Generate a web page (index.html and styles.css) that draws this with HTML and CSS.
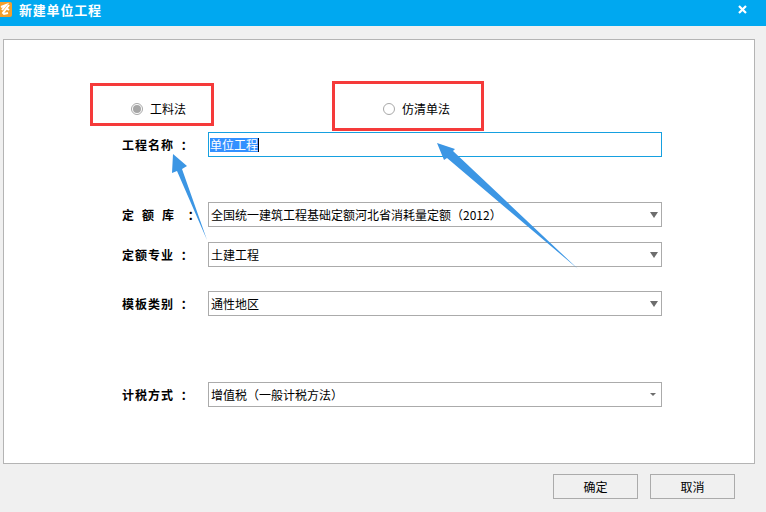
FILE: index.html
```html
<!DOCTYPE html>
<html lang="zh-CN">

<head>
  <meta charset="UTF-8" />
  <title>新建单位工程</title>
  <link rel="stylesheet" href="styles.css">
</head>

<body>
  <div class="window">

    <!-- Title bar -->
    <header class="titlebar">
      <div class="title-left">
        <svg class="logo" width="12" height="15" viewBox="0 0 12 15">
          <rect x="-4" y="0" width="16" height="15" rx="2" fill="#f5a02c" />
          <path d="M1 5 L6 3 L2 8 M9 3 L3 11 L4 12 L8 11 M6 6 L9 8" fill="none" stroke="#fff" stroke-width="2" />
        </svg>
        <span class="title-text">新建单位工程</span>
      </div>
      <svg class="close" width="9" height="9" viewBox="0 0 9 9">
        <path d="M1 1 L8 8 M8 1 L1 8" stroke="#fff" stroke-width="2.2" />
      </svg>
    </header>

    <!-- Main panel -->
    <main class="panel">
      <div class="radios">
        <label class="radio-item">
          <span class="radio checked"></span>
          <span>工料法</span>
        </label>
        <label class="radio-item">
          <span class="radio"></span>
          <span>仿清单法</span>
        </label>
      </div>

      <div class="row row-name">
        <div class="label">工程名称 ：</div>
        <div class="field focused"><span class="selected">单位工程</span><span class="caret"></span></div>
      </div>

      <div class="row row-quota">
        <div class="label"><span class="spread">定额库</span> ：</div>
        <div class="field select">
          <span>全国统一建筑工程基础定额河北省消耗量定额（2012）</span>
          <span class="arrow"></span>
        </div>
      </div>

      <div class="row row-major">
        <div class="label">定额专业 ：</div>
        <div class="field select">
          <span>土建工程</span>
          <span class="arrow"></span>
        </div>
      </div>

      <div class="row row-template">
        <div class="label">模板类别 ：</div>
        <div class="field select">
          <span>通性地区</span>
          <span class="arrow"></span>
        </div>
      </div>

      <div class="row row-tax">
        <div class="label">计税方式 ：</div>
        <div class="field select">
          <span>增值税（一般计税方法）</span>
          <span class="arrow small"></span>
        </div>
      </div>
    </main>

    <!-- Buttons -->
    <footer class="buttons">
      <button class="btn">确定</button>
      <button class="btn">取消</button>
    </footer>

    <!-- Annotations drawn over the dialog -->
    <div class="mark mark-one"></div>
    <div class="mark mark-two"></div>
    <svg class="arrows" width="766" height="512" viewBox="0 0 766 512">
      <path d="M173 154 L187 166 L182 169 L207 240 L177 171 L172 173 Z" fill="#3c96e4" />
      <path d="M437 143 L455 149 L453 151 L578 269 L447 158 L444 160 Z" fill="#3c96e4" />
    </svg>
  </div>
</body>

</html>
```

FILE: styles.css
```css
/* Page basics */
body {
  margin: 0;
  padding: 0;
  font-family: "Noto Sans CJK SC", "Liberation Sans", sans-serif;
  font-size: 12px;
  color: #000;
  background-color: #f0f0f0;
}

.window {
  position: relative;
  width: 766px;
  height: 512px;
  overflow: hidden;
  background-color: #f0f0f0;
}

/* Title bar */
.titlebar {
  height: 26px;
  display: flex;
  align-items: flex-start;
  justify-content: space-between;
  background-color: #00a8f0;
  color: #fff;
}

.title-left {
  display: flex;
  align-items: center;
  gap: 7px;
  height: 17px;
  padding-top: 1px;
}

.title-text {
  font-size: 13px;
  font-weight: 700;
  letter-spacing: 0.8px;
}

.close {
  margin: 5px 19px 0 0;
}

/* Main panel */
.panel {
  box-sizing: border-box;
  width: 752px;
  height: 425px;
  margin: 13px 0 0 3px;
  padding: 60px 0 0 118px;
  background-color: #fff;
  border: 1px solid #b4b4b4;
}

/* Radios */
.radios {
  display: flex;
  gap: 197px;
  height: 17px;
  margin-left: 9px;
}

.radio-item {
  display: flex;
  align-items: center;
  gap: 7px;
}

.radio {
  box-sizing: border-box;
  display: flex;
  align-items: center;
  justify-content: center;
  width: 12px;
  height: 12px;
  border: 1px solid #a8a8a8;
  border-radius: 50%;
  background-color: #fff;
}

.radio.checked::after {
  content: "";
  width: 8px;
  height: 8px;
  border-radius: 50%;
  background-color: #a6a6a6;
}

/* Form rows */
.row {
  display: flex;
  align-items: center;
  height: 25px;
}

.row-name {
  margin-top: 15px;
}

.row-quota {
  margin-top: 45px;
}

.row-major {
  margin-top: 15px;
}

.row-template {
  margin-top: 24px;
}

.row-tax {
  margin-top: 66px;
}

.label {
  width: 86px;
  font-weight: 700;
  letter-spacing: 1px;
  word-spacing: 3px;
  white-space: nowrap;
}

.spread {
  letter-spacing: 8px;
  margin-right: -1px;
}

.field {
  box-sizing: border-box;
  width: 454px;
  height: 25px;
  display: flex;
  align-items: center;
  justify-content: space-between;
  padding: 0 3px 0 2px;
  background-color: #fff;
  border: 1px solid #ababab;
}

.field.focused {
  justify-content: flex-start;
  padding-left: 1px;
  border-color: #16a0e0;
}

.selected {
  background-color: #3390ff;
  color: #fff;
  line-height: 14px;
}

.caret {
  width: 1px;
  height: 14px;
  background-color: #000;
}

/* Dropdown arrows */
.arrow {
  width: 0;
  height: 0;
  border-left: 4px solid transparent;
  border-right: 4px solid transparent;
  border-top: 6px solid #6d6d6d;
}

.arrow.small {
  margin-right: 2px;
  border-left-width: 3px;
  border-right-width: 3px;
  border-top-width: 3px;
}

/* Buttons */
.buttons {
  display: flex;
  gap: 12px;
  margin: 10px 0 0 553px;
}

.btn {
  box-sizing: border-box;
  width: 85px;
  height: 25px;
  padding: 0;
  font-family: inherit;
  font-size: 12px;
  color: #000;
  background-color: #f0f0f0;
  border: 1px solid #ababab;
}

/* Annotations */
.mark {
  position: absolute;
  box-sizing: border-box;
  border: 3px solid #f53a3a;
}

.mark-one {
  left: 90px;
  top: 83px;
  width: 124px;
  height: 43px;
}

.mark-two {
  left: 332px;
  top: 81px;
  width: 152px;
  height: 50px;
}

.arrows {
  position: absolute;
  left: 0;
  top: 0;
  pointer-events: none;
}
```
